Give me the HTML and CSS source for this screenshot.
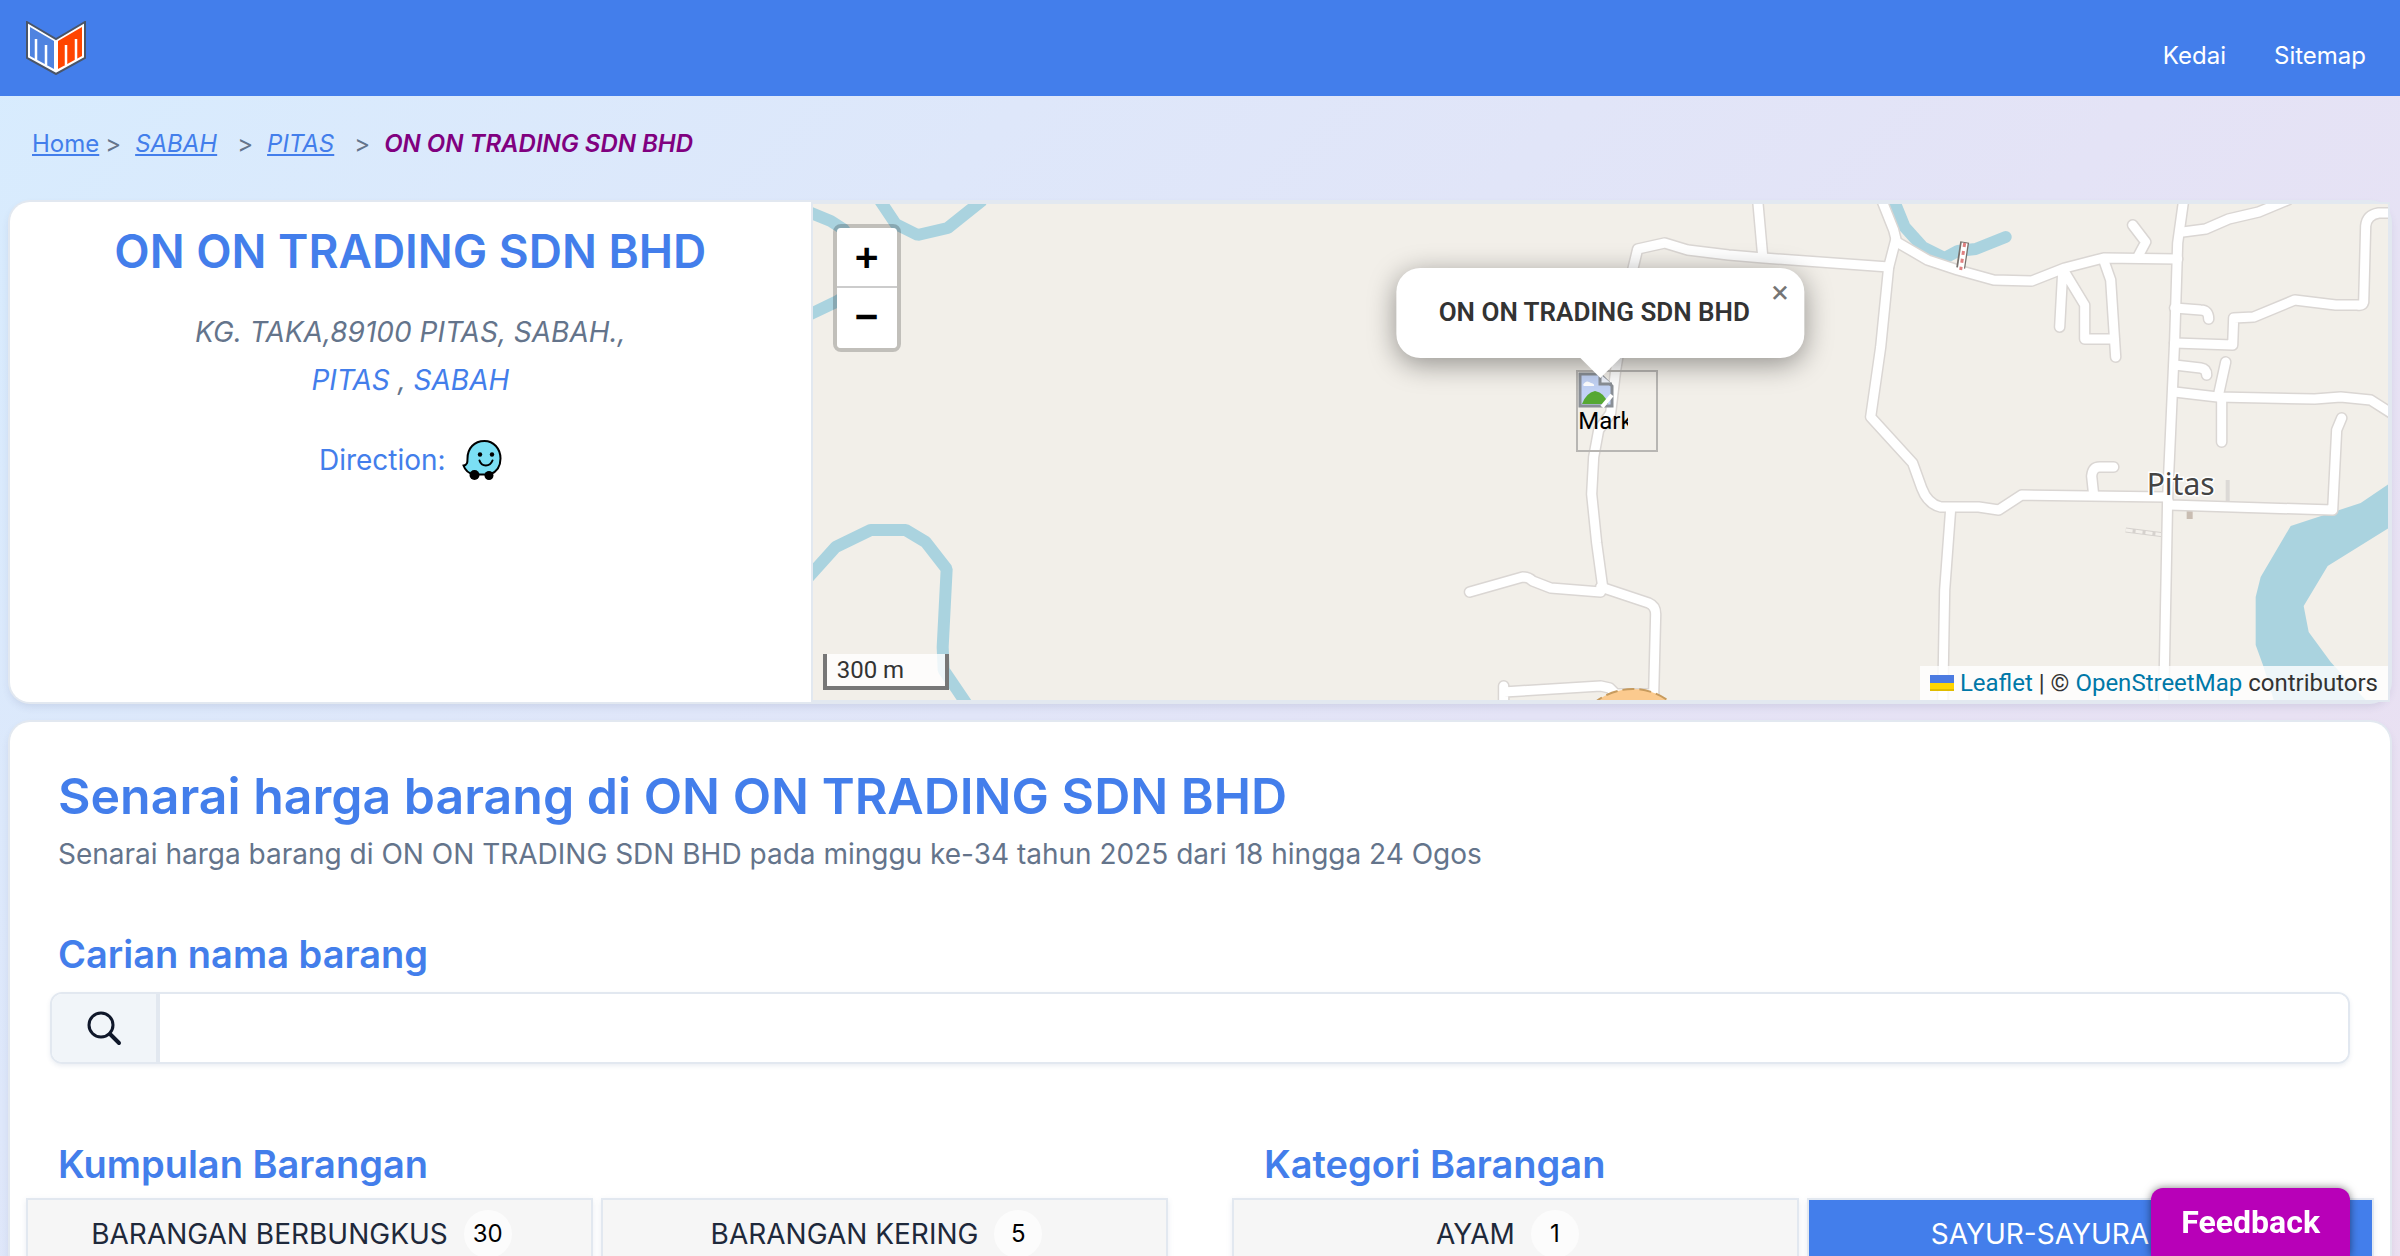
FILE: index.html
```html
<!DOCTYPE html>
<html lang="ms">
<head>
<meta charset="utf-8">
<meta name="viewport" content="width=device-width, initial-scale=1">
<title>ON ON TRADING SDN BHD</title>
<link rel="stylesheet" href="styles.css">
</head>
<body>
<header class="topbar">
  <a class="logo" href="#" aria-label="Home">
    <svg viewBox="0 0 60 54" width="60" height="54" aria-hidden="true">
      <path d="M1 1 30 18 59 1V37L30 53 1 37Z" fill="#fff" stroke="#4a5568" stroke-width="2"/>
      <path d="M4 6 28 20V48L4 35Z" fill="#4f83e0"/>
      <path d="M32 20 56 6V35L32 48Z" fill="#ff4500"/>
      <path d="M10 39V18M20 44V24M40 44V24M50 39V18" fill="none" stroke="#fff" stroke-width="2.500"/>
    </svg>
  </a>
  <nav class="menu">
    <a href="#">Kedai</a>
    <a href="#">Sitemap</a>
  </nav>
</header>

<main class="page">
  <nav class="crumbs" aria-label="Breadcrumb">
    <a href="#">Home</a>
    <span class="sep">&gt;</span>
    <a class="region" href="#">SABAH</a>
    <span class="sep">&gt;</span>
    <a class="region" href="#">PITAS</a>
    <span class="sep">&gt;</span>
    <span class="current">ON ON TRADING SDN BHD</span>
  </nav>

  <section class="card place">
    <div class="info">
      <h1>ON ON TRADING SDN BHD</h1>
      <address>KG. TAKA,89100 PITAS, SABAH.,<br><a href="#">PITAS</a> , <a href="#">SABAH</a></address>
      <p class="direction">Direction:
        <a href="#" aria-label="Waze">
          <svg viewBox="0 0 40 40" width="40" height="40" aria-hidden="true">
            <path d="M22.500 1C12 1 5.500 8.500 5.500 18.500C5.500 22 5.500 25 1.500 25.500C3 30 7 33.500 12 34.500H28C34.500 32 38.500 26 38.500 18.500C38.500 8.500 31.500 1 22.500 1Z" fill="#7bdff4" stroke="#000" stroke-width="2"/>
            <circle cx="12.500" cy="35" r="5"/><circle cx="27" cy="35.500" r="4.500"/>
            <circle cx="18" cy="14.500" r="2.200"/><circle cx="30" cy="14.500" r="2.200"/>
            <path d="M17.500 20.500C19.500 27 28 27 30.500 20.500" fill="none" stroke="#000" stroke-width="2" stroke-linecap="round"/>
          </svg>
        </a>
      </p>
    </div>
    <div class="map">
      <svg class="tiles" viewBox="0 0 1576 496" preserveAspectRatio="xMidYMid slice" aria-hidden="true">
        <defs>
          <g id="roads">
            <path d="M819 70 825 45 852 39 875 46 916 51 951 54 1076 63"/>
            <path d="M819 70 803 166 798 209 786 226 781 253 779 290 784 339 790 383"/>
            <path d="M657 388 710 373Q716 373 720 377L738 384 788 388"/>
            <path d="M788 383 836 399Q843 402 843 410L841 490"/>
            <path d="M691 482V500M691 488 788 482 797 484 803 490H841"/>
            <path d="M945 -4 950 52"/>
            <path d="M1069 -4 1081 26 1084 38 1115 56 1145 66 1181 76 1219 77 1252 64 1291 54 1365 55"/>
            <path d="M1083 36 1076 63 1068 143 1058 213 1100 259 1109 284Q1115 300 1128 303L1166 303 1186 306 1209 291 1354 293 1357 301 1520 306 1524 226 1529 214"/>
            <path d="M1138 305 1132 386 1130 500"/>
            <path d="M1371 -4 1365 39 1362 136 1355 293 1351 500"/>
            <path d="M1370 28 1393 25 1416 15 1446 8 1475 -4"/>
            <path d="M1580 9H1566Q1554 11 1553 22L1551 98Q1550 102 1545 101H1523L1482 96 1441 113 1421 114 1420 141 1362 139"/>
            <path d="M1320 21 1333 38 1325 53M1250 68 1247 123M1252 68 1272 101V135H1302M1291 56 1298 76 1303 153M1362 104 1388 106Q1396 106 1396 115M1362 161 1388 164Q1394 165 1394 171"/>
            <path d="M1362 188 1405 193 1502 195 1528 193 1558 196 1580 210"/>
            <path d="M1413 158 1406 190 1409 195V238M1301 263H1287Q1280 263 1279 272L1281 291"/>
          </g>
        </defs>
        <rect width="1576" height="496" fill="#f2efe9"/>
        <g class="river">
          <path d="M-4 8 18 17 32 26 40 60 36 90 23 98 -4 111"/>
          <path d="M67 -4 83 20 105 31 135 24 170 -4"/>
          <path d="M-4 373 23 343 58 326H93L113 338 134 365 130 443 131 466 154 500"/>
          <path stroke-linecap="round" d="M1081 -4 1092 23 1110 43 1132 54 1145 47 1163 45 1178 39 1193 33"/>
        </g>
        <path d="M1576 280 1548 299 1478 322 1448 373 1443 393V441L1451 463 1461 496H1553L1518 458 1496 428 1491 402 1515 362 1576 324Z" fill="#aad3df"/>
        <path d="M1415 276V299" stroke="#dcd9d6" stroke-width="4"/>
        <path d="M1313 326 1352 331" stroke="#d6d2ce" stroke-width="5"/>
        <path d="M1313 326 1352 331" stroke="#f4f1ec" stroke-width="3" stroke-dasharray="7 3"/>
        <path d="M1377 305V315" stroke="#c9bdb2" stroke-width="6"/>
        <use href="#roads" class="casing"/>
        <use href="#roads" class="surface"/>
        <path d="M1152 38 1148 64" stroke="#77706c" stroke-width="9"/>
        <path d="M1152 39 1148 66" stroke="#fff" stroke-width="6"/>
        <path d="M1152 39 1148 66" stroke="#e08080" stroke-width="3" stroke-dasharray="4 4"/>
        <circle cx="820" cy="545" r="60" fill="#fbca8e" stroke="#c79b5e" stroke-width="2" stroke-dasharray="12 5"/>
        <text class="town" x="1334" y="291">Pitas</text>
      </svg>

      <div class="marker">
        <svg viewBox="0 0 36 36" width="36" height="36" aria-hidden="true">
          <path d="M2 2H22L34 14V34H2Z" fill="#c3d3f5" stroke="#8a8f96" stroke-width="3"/>
          <path d="M5 13Q8 7 13 11 17 12 16 14H6Z" fill="#fff"/>
          <path d="M4 32Q8 21 17 19 27 21 30 32Z" fill="#56a833"/>
          <path d="M22 2V12H34" fill="#eef2fb" stroke="#8a8f96" stroke-width="3"/>
          <path d="M34 23 24 35" stroke="#fff" stroke-width="4"/>
        </svg>
        <span>Marker</span>
      </div>

      <div class="popup">
        <p>ON ON TRADING SDN BHD</p>
        <button type="button" aria-label="Close popup">×</button>
      </div>

      <div class="zoom">
        <button type="button">+</button>
        <button type="button">−</button>
      </div>
      <div class="scale">300 m</div>
      <div class="credits">
        <svg viewBox="0 0 24 16" width="24" height="16" aria-hidden="true"><path fill="#4c7be1" d="M0 0h24v8H0z"/><path fill="#ffd500" d="M0 8h24v6H0z"/><path fill="#e0bc00" d="M0 14h24v2H0z"/></svg>
        <a href="#">Leaflet</a> | © <a href="#">OpenStreetMap</a> contributors
      </div>
    </div>
  </section>

  <section class="card prices">
    <div class="intro">
      <h2>Senarai harga barang di ON ON TRADING SDN BHD</h2>
      <p>Senarai harga barang di ON ON TRADING SDN BHD pada minggu ke-34 tahun 2025 dari 18 hingga 24 Ogos</p>
    </div>
    <div class="search">
      <h3><label for="q">Carian nama barang</label></h3>
      <div class="field">
        <span class="glass">
          <svg viewBox="0 0 36 36" width="36" height="36" aria-hidden="true"><circle cx="15" cy="15" r="12" fill="none" stroke="#0f172a" stroke-width="3"/><path d="M24 24 33 33" stroke="#0f172a" stroke-width="4" stroke-linecap="round"/></svg>
        </span>
        <input id="q" type="text">
      </div>
    </div>
    <div class="filters">
      <section>
        <h3>Kumpulan Barangan</h3>
        <div class="options">
          <button type="button">BARANGAN BERBUNGKUS <span class="count">30</span></button>
          <button type="button">BARANGAN KERING <span class="count">5</span></button>
        </div>
      </section>
      <section>
        <h3>Kategori Barangan</h3>
        <div class="options">
          <button type="button">AYAM <span class="count">1</span></button>
          <button type="button" class="active">SAYUR-SAYURAN <span class="count">7</span></button>
        </div>
      </section>
    </div>
  </section>
</main>
<button type="button" class="feedback">Feedback</button>
</body>
</html>
```

FILE: styles.css
```css
* { box-sizing: border-box; }

body {
  margin: 0;
  min-height: 100vh;
  font-family: Inter, "Liberation Sans", sans-serif;
  font-size: 28px;
  line-height: 48px;
  color: #64748b;
  background: linear-gradient(135deg, #d7ecfe 0, #dee7fa 30%, #e4e3f6 60%, #ecdff0 100%);
}
a { color: #437eeb; text-decoration: none; }
h1, h2, h3, p { margin: 0; }
button { font: inherit; cursor: pointer; }
svg { display: block; }

.topbar {
  display: flex;
  justify-content: space-between;
  align-items: center;
  height: 96px;
  padding: 0 34px 0 26px;
  background: #437eeb;
}
.menu { display: flex; gap: 48px; padding-top: 16px; font-size: 24px; line-height: 36px; }
.menu a { color: #fff; }

.page { display: flex; flex-direction: column; padding: 0 10px 20px; }
.crumbs {
  display: flex;
  align-items: center;
  padding: 28px 22px 38px;
  font-size: 24px;
  line-height: 40px;
}
.crumbs a { text-decoration: underline; }
.crumbs .sep { margin: 0 14px 0 6px; }
.crumbs .region { font-style: italic; margin-right: 14px; }
.crumbs .current { color: #800080; font-style: italic; font-weight: 600; }

.card {
  background: #fff;
  border-radius: 20px;
  box-shadow: 0 0 0 2px #e2e8f0, 0 4px 8px rgba(60, 70, 120, .14);
}
.place { display: flex; margin-bottom: 20px; min-height: 500px; }
.info { flex: 802; padding: 16px 0; text-align: center; }
h1, h2, h3 { color: #437eeb; font-weight: 600; }
h1 { font-size: 46px; line-height: 66px; }
address { padding-top: 24px; }
.direction {
  display: flex;
  justify-content: center;
  align-items: center;
  gap: 16px;
  padding-top: 32px;
  color: #437eeb;
}

.map {
  position: relative;
  flex: 1578;
  border: 2px solid #e2e8f0;
  overflow: hidden;
  font-family: Roboto, "Liberation Sans", sans-serif;
  font-size: 24px;
  color: #333;
}
.tiles { position: absolute; inset: 0; width: 100%; height: 100%; }
.tiles use { fill: none; stroke-linejoin: round; stroke-linecap: round; }
.river { fill: none; stroke: #aad3df; stroke-width: 12; stroke-linejoin: bevel; }
.casing { stroke: #dad6d3; stroke-width: 12; }
.surface { stroke: #fff; stroke-width: 9; }
.town {
  font: 30px "Noto Sans", sans-serif;
  fill: #444;
  stroke: #fff;
  stroke-width: 3;
  paint-order: stroke;
}
.marker {
  position: absolute;
  left: calc(50% - 24px);
  top: 166px;
  width: 82px;
  height: 82px;
  border: 2px solid #b8b6b3;
  color: #000;
  line-height: 26px;
}
.marker span { display: block; width: 50px; overflow: hidden; }
.popup {
  position: absolute;
  left: 50%;
  top: 64px;
  transform: translateX(-50%);
  padding: 24px 54px 26px 42px;
  border-radius: 24px;
  background: #fff;
  box-shadow: 0 6px 28px rgba(0, 0, 0, .4);
  font-size: 26px;
  line-height: 40px;
  font-weight: 600;
  white-space: nowrap;
}
.popup::after {
  content: "";
  position: absolute;
  left: calc(50% - 20px);
  top: 100%;
  border: 20px solid transparent;
  border-top-color: #fff;
  border-bottom: 0;
}
.popup button {
  position: absolute;
  right: 0;
  top: 0;
  width: 48px;
  height: 48px;
  padding: 0;
  border: 0;
  background: none;
  color: #757575;
  font-size: 32px;
  font-weight: 400;
}
.zoom {
  position: absolute;
  left: 20px;
  top: 20px;
  width: 68px;
  border: 4px solid rgba(0, 0, 0, .2);
  border-radius: 8px;
}
.zoom button {
  display: block;
  width: 100%;
  height: 60px;
  padding: 0 0 4px;
  border: 0;
  background: #fff;
  color: #000;
  font: bold 38px "DejaVu Sans Mono", monospace;
  border-radius: 0 0 4px 4px;
}
.zoom button:first-child { padding: 0; border-bottom: 2px solid #ccc; border-radius: 4px 4px 0 0; }
.scale {
  position: absolute;
  left: 10px;
  bottom: 10px;
  width: 126px;
  border: 4px solid #777;
  border-top: 0;
  padding: 0 10px;
  background: rgba(255, 255, 255, .8);
  line-height: 32px;
}
.credits {
  position: absolute;
  right: 0;
  bottom: 0;
  padding: 0 10px;
  background: rgba(255, 255, 255, .8);
  line-height: 34px;
  white-space: nowrap;
}
.credits svg { display: inline-block; }
.credits a { color: #0078a8; }

.prices { padding: 40px 16px 60px; }
.intro { padding: 0 32px 46px; }
h2 { font-size: 50px; line-height: 68px; }
.search { padding: 0 24px 70px; }
h3 { font-size: 38px; line-height: 60px; }
.search h3 { padding: 0 8px 8px; }
.field {
  display: flex;
  height: 72px;
  border: 2px solid #e2e8f0;
  border-radius: 12px;
  overflow: hidden;
  box-shadow: 0 2px 4px rgba(60, 90, 140, .1);
}
.glass {
  display: flex;
  align-items: center;
  justify-content: center;
  width: 108px;
  background: #f1f5f9;
  border-right: 4px solid #e2e8f0;
}
.field input { flex: 1; border: 0; padding: 0 20px; font: inherit; background: #fff; outline: 0; }
.filters { display: grid; grid-template-columns: 1fr 1fr; gap: 64px; }
.filters h3 { padding: 0 32px 4px; }
.options { display: grid; grid-template-columns: 1fr 1fr; gap: 8px; }
.options button {
  display: flex;
  justify-content: center;
  align-items: center;
  gap: 16px;
  height: 72px;
  padding: 0 16px 0 0;
  border: 2px solid #e2e8f0;
  background: #f6f6f6;
  color: #1e293b;
  box-shadow: 0 2px 6px rgba(60, 90, 140, .1);
}
.options .active { background: #437eeb; color: #fff; }
.count {
  width: 48px;
  height: 48px;
  border-radius: 24px;
  background: #fcfcfc;
  color: #000;
  font-size: 24px;
  line-height: 48px;
}
.feedback {
  position: fixed;
  right: 50px;
  bottom: 0;
  height: 68px;
  padding: 0 30px;
  border: 0;
  border-radius: 12px 12px 0 0;
  background: #b800b8;
  color: #fff;
  font: bold 32px Roboto, sans-serif;
  box-shadow: 0 0 8px rgba(0, 0, 0, .5);
}
```
